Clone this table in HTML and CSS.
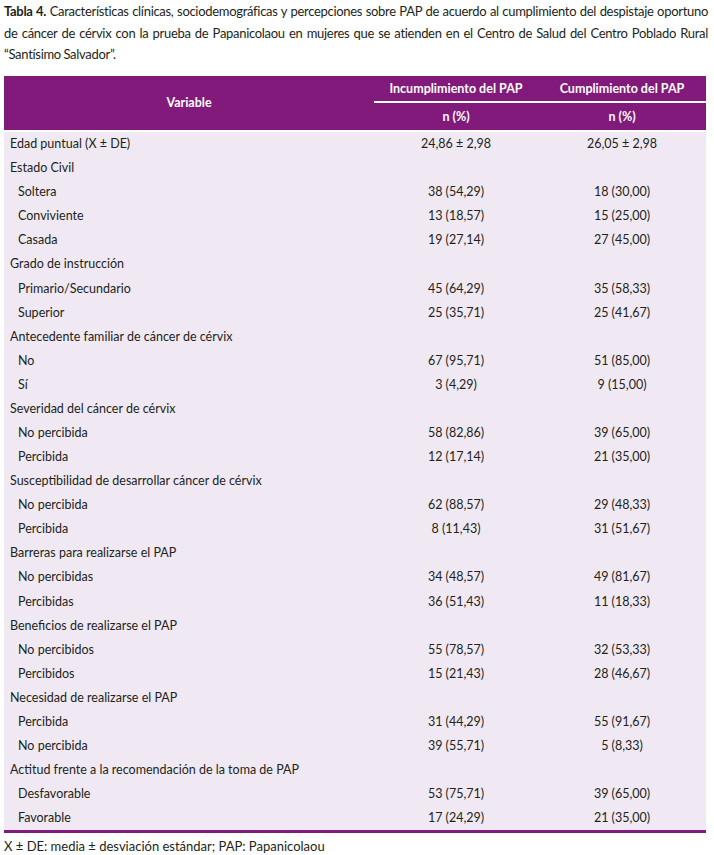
FILE: index.html
```html
<!DOCTYPE html>
<html lang="es">
<head>
<meta charset="utf-8">
<link rel="stylesheet" href="styles.css">
</head>
<body>
<div class="page">
  <div class="caption">
    <span class="line"><b>Tabla 4.</b> Características clínicas, sociodemográficas y percepciones sobre PAP de acuerdo al cumplimiento del despistaje oportuno</span>
    <span class="line">de cáncer de cérvix con la prueba de Papanicolaou en mujeres que se atienden en el Centro de Salud del Centro Poblado Rural</span>
    <span class="line last">“Santísimo Salvador”.</span>
  </div>
  <table class="tbl">
    <colgroup><col class="c1"><col class="c2"><col class="c3"></colgroup>
    <thead>
      <tr class="h1">
        <th rowspan="2" class="var">Variable</th>
        <th class="top">Incumplimiento del PAP</th>
        <th class="top">Cumplimiento del PAP</th>
      </tr>
      <tr class="h2">
        <th>n (%)</th>
        <th>n (%)</th>
      </tr>
    </thead>
    <tbody>
      <tr><td>Edad puntual (X ± DE)</td><td>24,86 ± 2,98</td><td>26,05 ± 2,98</td></tr>
      <tr><td>Estado Civil</td><td></td><td></td></tr>
      <tr><td class="sub">Soltera</td><td>38 (54,29)</td><td>18 (30,00)</td></tr>
      <tr><td class="sub">Conviviente</td><td>13 (18,57)</td><td>15 (25,00)</td></tr>
      <tr><td class="sub">Casada</td><td>19 (27,14)</td><td>27 (45,00)</td></tr>
      <tr><td>Grado de instrucción</td><td></td><td></td></tr>
      <tr><td class="sub">Primario/Secundario</td><td>45 (64,29)</td><td>35 (58,33)</td></tr>
      <tr><td class="sub">Superior</td><td>25 (35,71)</td><td>25 (41,67)</td></tr>
      <tr><td>Antecedente familiar de cáncer de cérvix</td><td></td><td></td></tr>
      <tr><td class="sub">No</td><td>67 (95,71)</td><td>51 (85,00)</td></tr>
      <tr><td class="sub">Sí</td><td>3 (4,29)</td><td>9 (15,00)</td></tr>
      <tr><td>Severidad del cáncer de cérvix</td><td></td><td></td></tr>
      <tr><td class="sub">No percibida</td><td>58 (82,86)</td><td>39 (65,00)</td></tr>
      <tr><td class="sub">Percibida</td><td>12 (17,14)</td><td>21 (35,00)</td></tr>
      <tr><td>Susceptibilidad de desarrollar cáncer de cérvix</td><td></td><td></td></tr>
      <tr><td class="sub">No percibida</td><td>62 (88,57)</td><td>29 (48,33)</td></tr>
      <tr><td class="sub">Percibida</td><td>8 (11,43)</td><td>31 (51,67)</td></tr>
      <tr><td>Barreras para realizarse el PAP</td><td></td><td></td></tr>
      <tr><td class="sub">No percibidas</td><td>34 (48,57)</td><td>49 (81,67)</td></tr>
      <tr><td class="sub">Percibidas</td><td>36 (51,43)</td><td>11 (18,33)</td></tr>
      <tr><td>Beneficios de realizarse el PAP</td><td></td><td></td></tr>
      <tr><td class="sub">No percibidos</td><td>55 (78,57)</td><td>32 (53,33)</td></tr>
      <tr><td class="sub">Percibidos</td><td>15 (21,43)</td><td>28 (46,67)</td></tr>
      <tr><td>Necesidad de realizarse el PAP</td><td></td><td></td></tr>
      <tr><td class="sub">Percibida</td><td>31 (44,29)</td><td>55 (91,67)</td></tr>
      <tr><td class="sub">No percibida</td><td>39 (55,71)</td><td>5 (8,33)</td></tr>
      <tr><td>Actitud frente a la recomendación de la toma de PAP</td><td></td><td></td></tr>
      <tr><td class="sub">Desfavorable</td><td>53 (75,71)</td><td>39 (65,00)</td></tr>
      <tr><td class="sub">Favorable</td><td>17 (24,29)</td><td>21 (35,00)</td></tr>
    </tbody>
  </table>
  <p class="note">X ± DE: media ± desviación estándar; PAP: Papanicolaou</p>
</div>
</body>
</html>
```

FILE: styles.css
```css
html, body {
  margin: 0;
  padding: 0;
  background: #ffffff;
}

.page {
  padding: 1px 6px 0 4px;
  font-family: Lato, "Open Sans", sans-serif;
  color: #231f20;
}

.caption {
  font-size: 13px;
  line-height: 21.5px;
  letter-spacing: -0.3px;
  word-spacing: -0.5px;
}

.caption .line {
  display: block;
  text-align: justify;
  text-align-last: justify;
}

.caption .line.last {
  text-align-last: left;
}

.caption b {
  font-weight: 700;
}

.tbl {
  margin-top: 10px;
  width: 702px;
  border-collapse: collapse;
  table-layout: fixed;
  font-size: 12.5px;
  border-bottom: 3px solid #821a7c;
}

.c1 { width: 370px; }
.c2 { width: 164px; }
.c3 { width: 168px; }

.tbl th {
  background: #821a7c;
  color: #ffffff;
  font-weight: 700;
  padding: 0;
  text-align: center;
}

.h1 th.top {
  height: 25px;
  border-bottom: 2px solid #ffffff;
}

.h2 th {
  height: 27px;
}

.tbl thead {
  border-bottom: 2px solid #ffffff;
}

.tbl td {
  background: #f0e9f3;
  height: 24.08px;
  padding: 0;
  text-align: center;
  white-space: nowrap;
}

.tbl td:first-child {
  text-align: left;
  padding-left: 6px;
}

.tbl td.sub {
  padding-left: 14px;
}

.note {
  margin: 4px 0 0;
  font-size: 13px;
  line-height: 18px;
}
```
